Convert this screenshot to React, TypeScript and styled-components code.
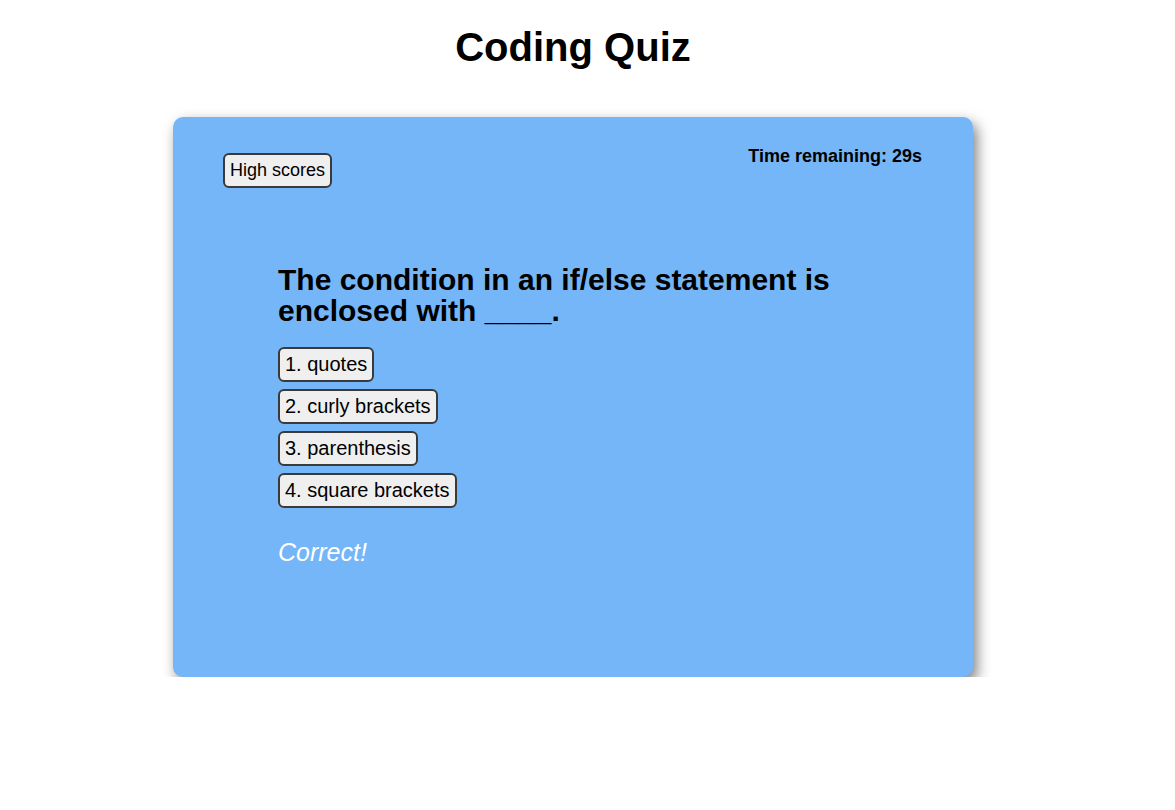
import React from "react";
import styled, { createGlobalStyle } from "styled-components";

const Global = createGlobalStyle`
  html, body { margin: 0; padding: 0; background: #ffffff; }
  body { font-family: "Liberation Sans", Arial, sans-serif; color: #000; }
`;

const Page = styled.div`
  width: 1146px;
  display: flex;
  flex-direction: column;
  align-items: center;
`;

const Title = styled.h1`
  font-size: 40px;
  font-weight: 700;
  margin: 24px 0 47px;
  line-height: 46px;
`;

const Card = styled.div`
  width: 800px;
  height: 560px;
  box-sizing: border-box;
  background: #74b6f7;
  border-radius: 10px;
  box-shadow: 4px 6px 14px rgba(0, 0, 0, 0.5);
  padding: 29px 51px 0 50px;
  display: flex;
  flex-direction: column;
`;

const TopBar = styled.div`
  display: flex;
  justify-content: space-between;
  align-items: flex-start;
`;

const Button = styled.button<{ $size?: number }>`
  font-family: "Liberation Sans", Arial, sans-serif;
  font-size: ${(p) => p.$size ?? 20}px;
  color: #000;
  background: #efefef;
  border: 2px solid #3a3a3a;
  border-radius: 6px;
  padding: 4px 5px;
  cursor: pointer;
  line-height: 1.15;
`;

const HighScores = styled(Button)`
  margin-top: 7px;
  padding: 5px 5px;
`;

const Timer = styled.div`
  font-size: 18px;
  font-weight: 700;
  line-height: 21px;
`;

const QuestionBlock = styled.div`
  margin: 76px 0 0 55px;
  display: flex;
  flex-direction: column;
  align-items: flex-start;
`;

const Question = styled.h2`
  font-size: 30px;
  font-weight: 700;
  line-height: 31px;
  margin: 0 0 21px;
  width: 600px;
`;

const Choices = styled.div`
  display: flex;
  flex-direction: column;
  align-items: flex-start;
  gap: 7px;
`;

const Feedback = styled.p`
  font-size: 25px;
  font-style: italic;
  color: #ffffff;
  margin: 30px 0 0;
`;

const choices = ["1. quotes", "2. curly brackets", "3. parenthesis", "4. square brackets"];

export default function App() {
  return (
    <>
      <Global />
      <Page>
        <Title>Coding Quiz</Title>
        <Card>
          <TopBar>
            <HighScores $size={18}>High scores</HighScores>
            <Timer>Time remaining: 29s</Timer>
          </TopBar>
          <QuestionBlock>
            <Question>The condition in an if/else statement is enclosed with ____.</Question>
            <Choices>
              {choices.map((c) => (
                <Button key={c}>{c}</Button>
              ))}
            </Choices>
            <Feedback>Correct!</Feedback>
          </QuestionBlock>
        </Card>
      </Page>
    </>
  );
}
